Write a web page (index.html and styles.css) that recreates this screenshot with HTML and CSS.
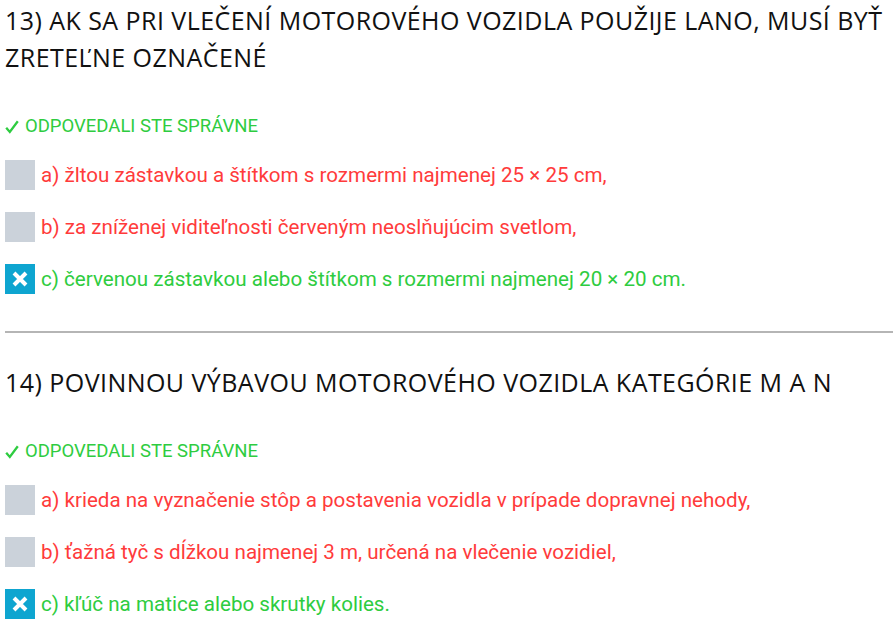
FILE: index.html
```html
<!DOCTYPE html>
<html lang="sk">
<head>
<meta charset="utf-8">
<link rel="stylesheet" href="styles.css">
</head>
<body>
<section class="question">
  <h2 class="q-title">13) AK SA PRI VLEČENÍ MOTOROVÉHO VOZIDLA POUŽIJE LANO, MUSÍ BYŤ ZRETEĽNE OZNAČENÉ</h2>
  <div class="status"><svg class="tick" viewBox="0 0 14 14" width="14" height="14"><path d="M1.2 7.8 L4.8 12 L12.8 1.2" fill="none" stroke="#2ecc40" stroke-width="2.3"/></svg><span>ODPOVEDALI STE SPRÁVNE</span></div>
  <ul class="answers">
    <li class="answer wrong"><span class="box"></span><span class="txt">a) žltou zástavkou a štítkom s rozmermi najmenej 25 × 25 cm,</span></li>
    <li class="answer wrong"><span class="box"></span><span class="txt">b) za zníženej viditeľnosti červeným neoslňujúcim svetlom,</span></li>
    <li class="answer right"><span class="box checked"><svg viewBox="0 0 30 30" width="30" height="30"><path d="M9 9 L21 21 M21 9 L9 21" stroke="#fff" stroke-width="4" stroke-linecap="butt"/></svg></span><span class="txt">c) červenou zástavkou alebo štítkom s rozmermi najmenej 20 × 20 cm.</span></li>
  </ul>
</section>
<hr class="divider">
<section class="question">
  <h2 class="q-title">14) POVINNOU VÝBAVOU MOTOROVÉHO VOZIDLA KATEGÓRIE M A N</h2>
  <div class="status"><svg class="tick" viewBox="0 0 14 14" width="14" height="14"><path d="M1.2 7.8 L4.8 12 L12.8 1.2" fill="none" stroke="#2ecc40" stroke-width="2.3"/></svg><span>ODPOVEDALI STE SPRÁVNE</span></div>
  <ul class="answers">
    <li class="answer wrong"><span class="box"></span><span class="txt">a) krieda na vyznačenie stôp a postavenia vozidla v prípade dopravnej nehody,</span></li>
    <li class="answer wrong"><span class="box"></span><span class="txt">b) ťažná tyč s dĺžkou najmenej 3 m, určená na vlečenie vozidiel,</span></li>
    <li class="answer right"><span class="box checked"><svg viewBox="0 0 30 30" width="30" height="30"><path d="M9 9 L21 21 M21 9 L9 21" stroke="#fff" stroke-width="4" stroke-linecap="butt"/></svg></span><span class="txt">c) kľúč na matice alebo skrutky kolies.</span></li>
  </ul>
</section>
</body>
</html>
```
FILE: styles.css
```css
html, body {
  margin: 0;
  padding: 0;
  background: #fff;
}
body {
  padding: 0 1px 0 5px;
  font-family: Roboto, "Liberation Sans", sans-serif;
}
.question {
  display: flex;
  flex-direction: column;
}
.q-title {
  margin: 0;
  padding-top: 2px;
  font-family: "Open Sans", "DejaVu Sans", sans-serif;
  font-weight: 500;
  font-size: 25px;
  line-height: 37px;
  color: #111;
  letter-spacing: 0.45px;
}
.status {
  margin-top: 38px;
  display: flex;
  align-items: center;
  gap: 6px;
  font-size: 18.5px;
  line-height: 24px;
  height: 24px;
  color: #2ecc40;
}
.tick {
  display: block;
  flex: none;
  margin-top: 1px;
}
.answers {
  list-style: none;
  margin: 22px 0 0 0;
  padding: 0;
  display: flex;
  flex-direction: column;
  gap: 22px;
}
.answer {
  display: flex;
  align-items: center;
  gap: 6px;
  height: 30px;
  font-size: 20.6px;
}
.wrong .txt { color: #ff3b3b; }
.right .txt { color: #2ecc40; }
.box {
  width: 30px;
  height: 30px;
  flex: none;
  background: #cbd2da;
  display: block;
}
.box.checked {
  background: #0ea5d0;
}
.box svg { display: block; }
.divider {
  border: 0;
  border-top: 2px solid #b5b5b5;
  margin: 37px 0 0 0;
}
.divider + .question .q-title { padding-top: 31px; }
```
